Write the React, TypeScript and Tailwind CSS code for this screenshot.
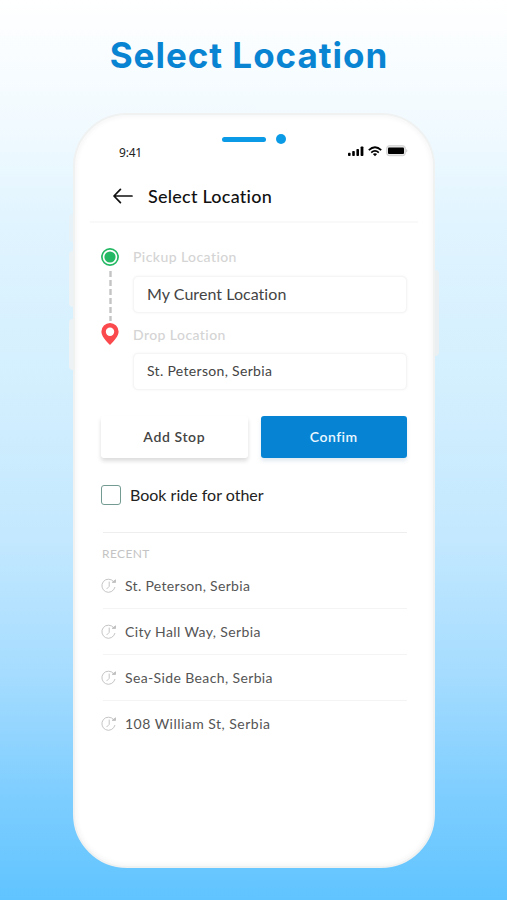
import type { ReactNode } from "react";

const recentPlaces = [
  { name: "St. Peterson, Serbia", tracking: "tracking-[0.32px]" },
  { name: "City Hall Way, Serbia", tracking: "tracking-[0.38px]" },
  { name: "Sea-Side Beach, Serbia", tracking: "tracking-[0.38px]" },
  { name: "108 William St, Serbia", tracking: "tracking-[0.48px]" },
];

// ============================================
// Icons
// ============================================
const SignalIcon = () => (
  <svg width="16" height="11" viewBox="0 0 16 11" fill="#000">
    <rect x="0" y="6.8" width="2.6" height="3.2" rx="0.8" />
    <rect x="4.2" y="5" width="2.6" height="5" rx="0.8" />
    <rect x="8.4" y="3" width="2.6" height="7" rx="0.8" />
    <rect x="12.6" y="0.5" width="2.8" height="9.5" rx="0.8" />
  </svg>
);

const WifiIcon = () => (
  <svg width="14" height="11" viewBox="0 0 14 11" fill="none" stroke="#000" strokeWidth="1.8">
    <path d="M.8 4.1Q7-1.7 13.2 4.1" />
    <path d="M3.2 6.6Q7 3.2 10.8 6.6" />
    <path d="M7 10.2 4.9 8.1Q7 6.5 9.1 8.1Z" fill="#000" stroke="none" />
  </svg>
);

const BatteryIcon = () => (
  <svg width="22" height="12" viewBox="0 0 22 12">
    <rect x="0.7" y="0.7" width="18.6" height="10" rx="2.5" fill="#e8e8e8" stroke="#d0d0d0" strokeWidth="1" />
    <rect x="2" y="2.4" width="16" height="6.6" rx="1" fill="#000" />
    <path d="M20.3 4v3.6q1-.5 1-1.8t-1-1.8Z" fill="#c4c4c4" />
  </svg>
);

const BackIcon = () => (
  <svg width="20" height="16" viewBox="0 0 20 16" fill="none" stroke="#111" strokeWidth="1.7" strokeLinecap="round" strokeLinejoin="round">
    <path d="M19 8H1.2M7.4 1.4 1 8l6.4 6.6" />
  </svg>
);

const PickupIcon = () => (
  <svg width="18" height="18" viewBox="0 0 18 18">
    <circle cx="9" cy="9" r="8.1" fill="#fff" stroke="#23b863" strokeWidth="1.7" />
    <circle cx="9" cy="9" r="5.6" fill="#23b863" />
  </svg>
);

const PinIcon = () => (
  <svg width="18" height="22" viewBox="0 0 18 22">
    <path
      d="M9 0A8.6 8.6 0 0 0 .4 8.6C.4 13 4.2 17.2 9 22c4.8-4.8 8.6-9 8.6-13.4A8.6 8.6 0 0 0 9 0Z"
      fill="#fa4a4d"
    />
    <circle cx="9" cy="8.8" r="4.2" fill="#fff" />
  </svg>
);

const HistoryIcon = () => (
  <svg width="16" height="16" viewBox="0 0 16 16" fill="none" stroke="#bdbdbd" strokeWidth="0.9" strokeLinecap="round" strokeLinejoin="round">
    <path d="M13.9 9.4A6.6 6.6 0 1 1 12.6 3.5" />
    <path d="M11.6 4.4h2.9V2.2Z" fill="#bdbdbd" />
    <path d="M8.2 4v4.4l-2.4 2.4" />
  </svg>
);

// ============================================
// Form pieces
// ============================================
const FieldLabel = ({ children }: { children: ReactNode }) => (
  <div className="h-5 text-[14px] leading-5 font-medium tracking-[0.42px] text-[#d4d4d4]">{children}</div>
);

const FieldBox = ({ children }: { children: ReactNode }) => (
  <div className="flex h-[37px] items-center rounded-[5px] border border-[#f5f5f5] bg-white pb-[2px] pl-[13px] text-[#444] shadow-[0_0_3px_rgba(0,0,0,0.05)]">
    {children}
  </div>
);

export default function App() {
  return (
    <div className="flex h-[900px] w-[507px] flex-col items-center overflow-hidden bg-[linear-gradient(180deg,#ffffff_0%,#f1faff_14%,#e0f4ff_25%,#d3effe_43%,#c3e8ff_60%,#a5dcff_75%,#7fceff_88%,#60c4ff_100%)] font-['Lato','Noto_Sans',sans-serif]">
      <h1 className="mt-[32px] -ml-[9px] h-[46px] font-['Inter',sans-serif] text-[35px] leading-[46px] font-bold tracking-[0.98px] whitespace-nowrap text-[#0984d2]">
        Select Location
      </h1>

      <div className="relative mt-[35px] ml-px h-[755px] w-[362px]">
        {/* side buttons */}
        <div className="absolute top-[101px] -left-[4px] h-[28px] w-[6px] rounded-l bg-[#e6f2f8]" />
        <div className="absolute top-[138px] -left-[4px] h-[56px] w-[6px] rounded-l bg-[#edf2f4]" />
        <div className="absolute top-[206px] -left-[4px] h-[51px] w-[6px] rounded-l bg-[#edf2f4]" />
        <div className="absolute top-[157px] -right-[4px] h-[86px] w-[6px] rounded-r bg-[#eaf0f1]" />

        <div className="relative h-full rounded-[54px] border-2 border-[#f0f1f1] bg-white px-[15px] pt-[19px] shadow-[inset_0_0_4px_2px_#f7f7f7]">
          <div className="flex h-[10px] items-center justify-center gap-[10px]">
            <span className="h-[5px] w-[44px] rounded-full bg-[#0b9be6]" />
            <span className="size-[10px] rounded-full bg-[#0b9be6]" />
          </div>

          <div className="mt-px flex h-4 items-center justify-between pr-[10px] pl-[29px]">
            <span className="font-['Noto_Sans',sans-serif] text-[12px] leading-4 tracking-[-0.2px] text-[#222]">9:41</span>
            <div className="-mt-[4px] flex items-center gap-[4px]">
              <SignalIcon />
              <WifiIcon />
              <BatteryIcon />
            </div>
          </div>

          <div className="mt-[19px] flex h-[43px] items-center border-b-2 border-[#f9f9f9] pb-[10px] pl-[23px]">
            <BackIcon />
            <span className="ml-[15px] text-[18px] leading-6 font-medium tracking-[0.24px] text-[#111]">Select Location</span>
          </div>

          <div className="px-[11px]">
            <div className="mt-[25px] flex gap-[14px]">
              <div className="flex w-[18px] flex-col items-center">
                <PickupIcon />
                <svg width="3" height="50" viewBox="0 0 3 50" className="mt-[5px]">
                  <path d="M1.5 0v50" stroke="#c4c4c4" strokeWidth="2.4" strokeDasharray="6 3" />
                </svg>
                <div className="mt-[2px]">
                  <PinIcon />
                </div>
              </div>
              <div className="-mt-px flex-1">
                <FieldLabel>Pickup Location</FieldLabel>
                <div className="mt-[9px]">
                  <FieldBox>
                    <span className="text-[16px] leading-5 tracking-[0.05px]">My Curent Location</span>
                  </FieldBox>
                </div>
                <div className="mt-[12px]">
                  <FieldLabel>Drop Location</FieldLabel>
                </div>
                <div className="mt-[8px]">
                  <FieldBox>
                    <span className="text-[14px] leading-5 tracking-[0.32px]">St. Peterson, Serbia</span>
                  </FieldBox>
                </div>
              </div>
            </div>

            <div className="mt-[26px] flex gap-[13px]">
              <button className="h-[42px] flex-1 rounded-[3px] bg-white pb-[2px] text-[14px] font-semibold tracking-[0.6px] text-[#444] shadow-[0_3px_4px_rgba(0,0,0,0.14)]">
                Add Stop
              </button>
              <button className="h-[42px] flex-1 rounded-[3px] bg-[#0684d3] pb-[2px] text-[14px] font-semibold tracking-[0.5px] text-[#eaf7ff] shadow-[0_3px_4px_rgba(0,80,130,0.12)]">
                Confim
              </button>
            </div>

            <label className="mt-[27px] flex h-5 items-center gap-[9px]">
              <span className="size-5 rounded-[3px] border-[1.5px] border-[#739b91]" />
              <span className="text-[16px] leading-5 text-[#222]">Book ride for other</span>
            </label>

            <div className="mt-[27px] ml-[2px] border-t border-[#eeeeee]" />
            <div className="mt-[12px] ml-px h-[18px] text-[12px] leading-[18px] tracking-[0.4px] text-[#c4c4c4]">RECENT</div>

            <ul className="ml-[2px]">
              {recentPlaces.map((place) => (
                <li key={place.name} className="flex h-[46px] items-center border-b border-[#f4f4f4] last:border-0">
                  <span className="-ml-[2px]">
                    <HistoryIcon />
                  </span>
                  <span className={`ml-[8px] text-[14px] leading-5 text-[#555] ${place.tracking}`}>{place.name}</span>
                </li>
              ))}
            </ul>
          </div>
        </div>
      </div>
    </div>
  );
}
